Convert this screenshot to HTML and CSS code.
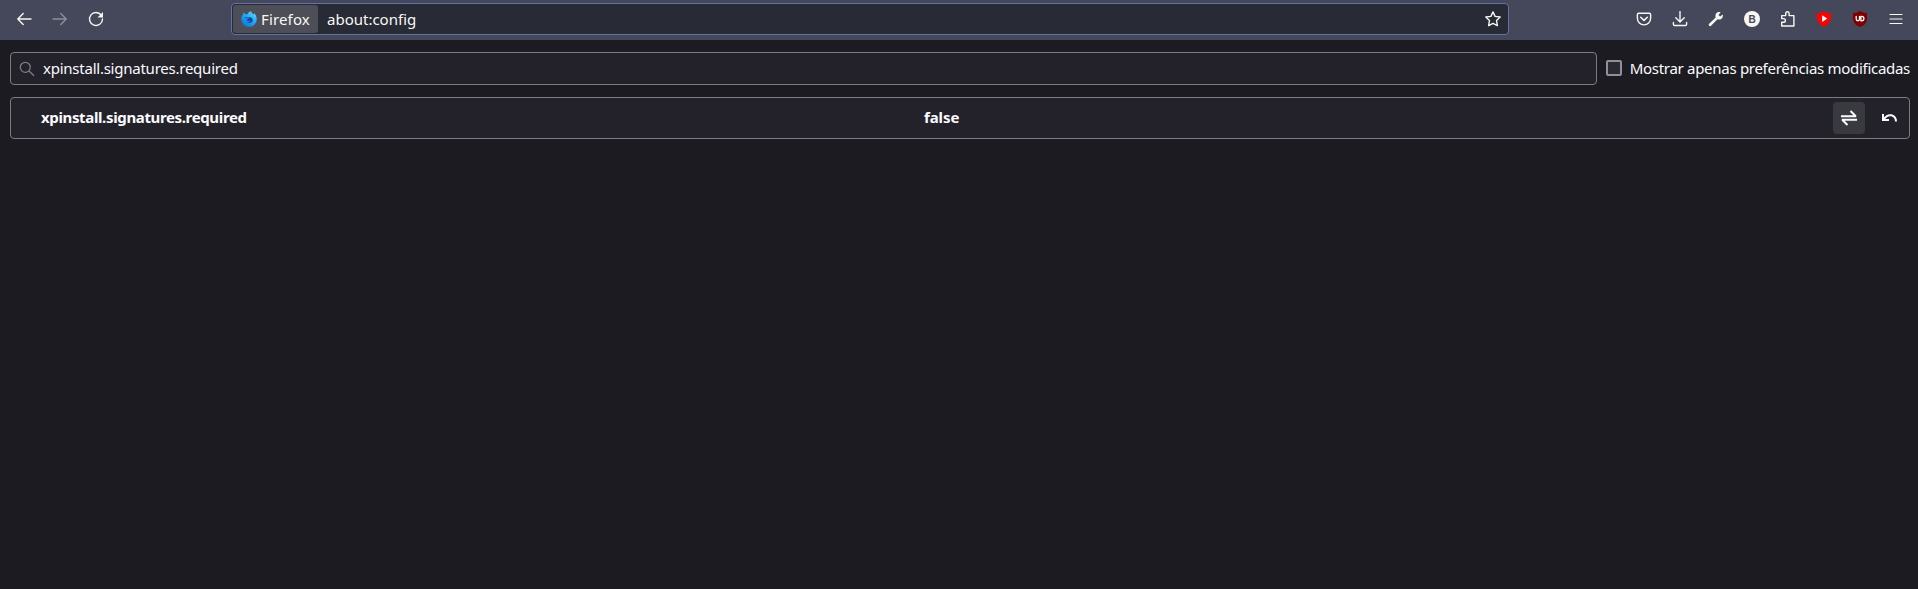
FILE: index.html
```html
<!DOCTYPE html>
<html lang="pt-BR">
<head>
<meta charset="utf-8">
<title>about:config</title>
<link rel="stylesheet" href="styles.css">
</head>
<body>
<header class="toolbar">
  <nav class="nav">
    <span class="tool"><svg class="icon" viewBox="0 0 16 16"><path d="M15 8H2M7.200 2.600L1.800 8l5.400 5.400"/></svg></span>
    <span class="tool dim"><svg class="icon" viewBox="0 0 16 16"><path d="M1 8h13M8.800 2.600L14.200 8l-5.400 5.400"/></svg></span>
    <span class="tool"><svg class="icon" viewBox="0 0 16 16"><path d="M13.300 4.200A6.500 6.500 0 1 0 14.500 8"/><path class="solid" d="M15 1v5.500H9.500z"/></svg></span>
  </nav>
  <div class="urlbar">
    <span class="identity">
      <svg class="firefox" viewBox="0 0 16 16">
        <defs><linearGradient id="fx" x1="1" y1="0" x2="0.300" y2="1"><stop offset="0" stop-color="#65e9f5"/><stop offset=".5" stop-color="#23adf5"/><stop offset="1" stop-color="#087bdc"/></linearGradient></defs>
        <path fill="url(#fx)" d="M10.300 0c-.1 1.400.8 2.300 1.800 3.100.6.400.8.500 1 .2V2c1.600 1.600 2.600 3.700 2.600 6.200A7.700 7.700 0 0 1 8 16 7.700 7.700 0 0 1 .3 8.500C.3 6 1 4.500 2 3.400l.2-1.900 1.700 1.600c.9-.2 1.700 0 2.400.4C7.200 1.700 8.500.7 10.300 0z"/>
        <path fill="#20429f" d="M4.300 6.100c1.100.5 2.200.5 3.200.4 1.800-.7 4.200.2 4.200 2.500 0 1.800-1.500 3-3.500 3-2.500 0-4.300-1.900-4.500-4.100z"/>
        <path fill="#1593e8" d="M3.800 6.500c1 .9 2.400.7 4 .8-.3 1-2 .9-2 1.700 0 1.200 2.100 1.700 3.600.8-.8 2.400-5 2.200-6.200-.8z"/>
      </svg>
      <span class="identity-text">Firefox</span>
    </span>
    <span class="address">about:config</span>
    <svg class="icon star" viewBox="0 0 16 16"><path d="M8 .9l2.100 4.500 5.100.6-3.700 3.500.9 5.100L8 12.300l-4.400 2.300.9-5.100L.8 6l5.100-.6z"/></svg>
  </div>
  <nav class="extensions">
    <span class="tool"><svg class="icon" viewBox="0 0 16 16"><path d="M2.700 2.200h10.600q1.300 0 1.300 1.300v3.800a6.600 6.600 0 0 1-13.200 0V3.500q0-1.300 1.300-1.300z"/><path d="M4.700 6.200L8 9.400l3.300-3.200" stroke-width="1.500"/></svg></span>
    <span class="tool"><svg class="icon" viewBox="0 0 16 16"><path d="M8 .5v10.300M3.800 6.700L8 10.900l4.200-4.200M1.400 11.500v1.700q0 1.300 1.300 1.300h10.600q1.300 0 1.300-1.300v-1.700"/></svg></span>
    <span class="tool"><svg class="icon" viewBox="0 0 16 16"><path class="solid" d="M14.700 3.400l-2.600 2-1.600-1.500 2-2.500C9.800.3 7 2.400 7.400 5.500L7.700 6.400.9 13c-.9.9.9 2.900 1.900 1.900L9.500 8.200c3.500 1.200 6.100-1.800 5.200-4.800z"/></svg></span>
    <span class="tool"><svg class="icon badge" viewBox="0 0 16 16"><circle cx="8" cy="8" r="8"/><text x="8" y="11.700" text-anchor="middle">B</text></svg></span>
    <span class="tool"><svg class="icon" viewBox="0 0 16 16"><path d="M1.700 15V11.200h1.900a1.800 1.800 0 0 0 0-3.600H1.700V4.600h4V2.500a1.700 1.700 0 0 1 3.400 0v2.100h4.800V15z"/></svg></span>
    <span class="tool"><svg class="icon yt" viewBox="0 0 16 16"><path d="M8 .2q3.200 2 7.600 2.500-.1 9.200-7.600 13.200Q.5 11.900.4 2.700 4.800 2.200 8 .2z"/><path class="play" d="M6.200 4.300l5 3.300-5 3.300z"/></svg></span>
    <span class="tool"><svg class="icon ub" viewBox="0 0 16 16"><path d="M8 0q2.700 2 7 2.200V8q0 5.200-7 8-7-2.800-7-8V2.200Q5.300 2 8 0z"/><path class="mark" d="M4.200 5.300v2.800q0 1.700 1.700 1.700 1.600 0 1.600-1.700V5.300M8.900 5.400h.8q2.200 0 2.200 2.200T9.700 9.800h-.8z"/></svg></span>
    <span class="tool"><svg class="icon menu" viewBox="0 0 16 16"><path d="M2 3.500h12M2 8h12M2 12.500h12"/></svg></span>
  </nav>
</header>
<main class="page">
  <div class="search-row">
    <div class="search">
      <svg class="lens" viewBox="0 0 16 16"><circle cx="6.300" cy="6.300" r="5"/><path d="M10 10l4.700 4.500"/></svg>
      <span class="query">xpinstall.signatures.required</span>
    </div>
    <label class="filter"><span class="checkbox"></span><span class="filter-text">Mostrar apenas preferências modificadas</span></label>
  </div>
  <div class="pref">
    <span class="pref-name">xpinstall.signatures.required</span>
    <span class="pref-value">false</span>
    <span class="button toggle"><svg viewBox="0 0 16 16"><path d="M0 6.200h15.200M9.500 1l5.300 5.200M16 9.800H.8M6.500 15L1.200 9.800"/></svg></span>
    <span class="button"><svg viewBox="0 0 16 16"><path d="M2.500 9.500Q6 4.300 10.500 5.300q4.300 1.200 4.500 6.200"/><path d="M2 4v6h6"/></svg></span>
  </div>
</main>
</body>
</html>
```
FILE: styles.css
```css
* { box-sizing: border-box; }
body {
  margin: 0;
  min-height: 100vh;
  background: #1c1b22;
  color: #fbfbfe;
  font: 15px/20px "Noto Sans", "Open Sans", sans-serif;
  white-space: nowrap;
}
.toolbar { display: flex; height: 40px; padding: 0 4px 0 6px; background: #45475a; }
.nav, .extensions { display: flex; height: 38px; }
.nav { width: 225px; }
.extensions { margin-left: auto; }
.tool { display: flex; align-items: center; justify-content: center; width: 36px; }
svg { display: block; width: 16px; height: 16px; flex: none; fill: none; stroke: #f8f8f2; stroke-width: 1.4; stroke-linecap: round; stroke-linejoin: round; }
.dim { opacity: .4; }
.solid { fill: #f8f8f2; stroke: none; }
.urlbar {
  display: flex;
  align-items: center;
  width: 1278px;
  height: 32px;
  margin-top: 3px;
  padding: 0 7px 0 1px;
  background: #282a36;
  border: 1px solid #6272a4;
  border-radius: 4px;
  color: #f8f8f2;
}
.identity { display: flex; align-items: center; width: 85px; height: 28px; padding-left: 8px; background: #4d4e58; border-radius: 3px; }
.firefox { stroke: none; }
.identity-text { margin-left: 4px; letter-spacing: .15px; }
.address { margin-left: 9px; }
.star { margin-left: auto; }
.badge { fill: #f8f8f2; stroke: none; }
.badge text { fill: #45475a; font: bold 10px "Liberation Sans", sans-serif; }
.yt { fill: #f00; stroke: none; }
.play { fill: #fff; }
.ub { fill: #800000; stroke: none; }
.mark { fill: none; stroke: #fff; stroke-width: 1.3; }
.menu { stroke-width: 1.2; }
.page { padding: 12px 8px 0 10px; }
.search-row { display: flex; height: 33px; }
.search { display: flex; align-items: center; width: 1587px; padding-left: 8px; background: #23222b; border: 1px solid #7c7b82; border-radius: 4px; }
.lens { stroke: #7d7c84; stroke-width: 1.3; }
.query { margin-left: 8px; padding-bottom: 2px; letter-spacing: -.24px; }
.filter { display: flex; align-items: center; flex: none; margin-left: 9px; }
.checkbox { width: 16px; height: 16px; margin-bottom: 1px; background: #2b2a33; border: 2px solid #8f8f9d; border-radius: 2px; }
.filter-text { margin-left: 8px; padding-bottom: 1px; letter-spacing: -.29px; }
.pref { display: flex; align-items: center; height: 42px; margin-top: 12px; padding: 0 4px 0 30px; background: #23222b; border: 1px solid #7c7b82; border-radius: 4px; font-weight: bold; }
.pref-name { width: 883px; padding-bottom: 2px; letter-spacing: -.36px; }
.pref-value { flex: 1; padding-bottom: 2px; letter-spacing: -.1px; }
.button { display: flex; align-items: center; justify-content: center; width: 32px; height: 32px; margin-left: 8px; border-radius: 4px; }
.button svg { stroke: #fbfbfe; stroke-width: 2; stroke-linecap: butt; stroke-linejoin: miter; }
.toggle { background: #393940; }
```
